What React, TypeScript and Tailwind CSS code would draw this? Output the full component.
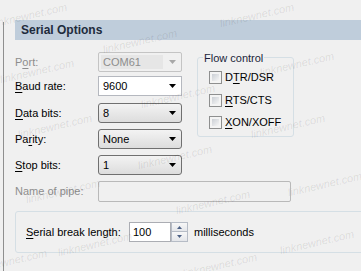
import React from 'react'

// faint diagonal watermark copies, [centerX, centerY]
const marks: [number, number][] = [
  [30, 16], [257, 16], [140, 42], [37, 72], [297, 65], [178, 97],
  [55, 127], [288, 127], [175, 158], [63, 192], [213, 203], [325, 185],
  [95, 245], [317, 243], [10, 262], [220, 266],
]

function Arrow({ color = '#000' }: { color?: string }) {
  return (
    <svg width="7" height="4" viewBox="0 0 7 4" className="shrink-0">
      <path d="M0 0h7L3.5 4z" fill={color} />
    </svg>
  )
}

function DropList({ value }: { value: string }) {
  return (
    <div className="w-[84px] h-[20px] rounded-[3px] border border-[#707070] bg-gradient-to-b from-[#f3f3f3] to-[#dddddd] flex items-center pl-[4px] pr-[5px]">
      <span className="flex-1">{value}</span>
      <Arrow />
    </div>
  )
}

function Row({ label, mt, children }: { label: React.ReactNode; mt: string; children: React.ReactNode }) {
  return (
    <div className={`flex items-center h-[20px] ${mt}`}>
      <div className="w-[83px]">{label}</div>
      {children}
    </div>
  )
}

function CheckRow({ label, mt }: { label: React.ReactNode; mt: string }) {
  return (
    <div className={`flex items-center ${mt}`}>
      <div className="w-[13px] h-[13px] border border-[#8e8f8f] bg-[#f4f4f4] p-[2px]">
        <div className="w-full h-full bg-gradient-to-br from-[#cbcfd5] to-[#f6f6f6]" />
      </div>
      <span className="ml-[3px] leading-[13px]">{label}</span>
    </div>
  )
}

const u = (c: string) => <span className="underline underline-offset-[2px]">{c}</span>

export default function App() {
  return (
    <div className="relative w-[361px] h-[271px] overflow-hidden bg-[#f0f0f0] flex font-['Liberation_Sans',Arial,sans-serif] text-[11px] text-black">
      <div className="ml-[3px] mt-[22px] w-px bg-[#8f8f8f]" />
      <div className="ml-[11px] pt-[20px] flex-1 min-w-0 flex flex-col">
        <div className="h-[20px] bg-[#bfcddb] pl-[6px] flex items-center text-[12px] font-bold text-[#1e2b3c]">
          Serial Options
        </div>

        <div className="flex mt-[12px]">
          <div className="flex flex-col w-[167px]">
            <Row label={<span className="text-[#8d8d8d]">P{u('o')}rt:</span>} mt="">
              <div className="w-[84px] h-[20px] rounded-[2px] border border-[#c4c4c4] flex items-center pl-[2px] pr-[5px]">
                <span className="w-[62px] h-[14px] bg-[#e6e6e6] text-[#8d8d8d] pl-[2px] leading-[14px]">COM61</span>
                <span className="flex-1" />
                <Arrow color="#a8a8a8" />
              </div>
            </Row>
            <Row label={<span>{u('B')}aud rate:</span>} mt="mt-[4px]">
              <div className="w-[84px] h-[20px] border border-[#b5b8bf] bg-white flex items-center pl-[4px] pr-[5px]">
                <span className="flex-1">9600</span>
                <Arrow />
              </div>
            </Row>
            <Row label={<span>{u('D')}ata bits:</span>} mt="mt-[7px]">
              <DropList value="8" />
            </Row>
            <Row label={<span>Pa{u('r')}ity:</span>} mt="mt-[6px]">
              <DropList value="None" />
            </Row>
            <Row label={<span>{u('S')}top bits:</span>} mt="mt-[6px]">
              <DropList value="1" />
            </Row>
          </div>

          <div className="relative ml-[15px] mt-[5px] w-[97px] h-[80px] rounded-[3px] border border-[#d5dfe5] pl-[11px] pt-[13px]">
            <span className="absolute -top-[8px] left-[5px] px-[1px] bg-[#f0f0f0] text-[#1b1f3a]">Flow control</span>
            <CheckRow label={<span>D{u('T')}R/DSR</span>} mt="" />
            <CheckRow label={<span>{u('R')}TS/CTS</span>} mt="mt-[10px]" />
            <CheckRow label={<span>{u('X')}ON/XOFF</span>} mt="mt-[9px]" />
          </div>
        </div>

        <div className="flex items-center mt-[6px] h-[21px]">
          <div className="w-[83px] text-[#8d8d8d]">Name of pipe:</div>
          <div className="w-[193px] h-[21px] rounded-[2px] border border-[#b9b9b9]" />
        </div>

        <div className="mt-[9px] h-[42px] w-[360px] shrink-0 rounded-[3px] border border-[#d5dfe5] flex items-center pl-[10px]">
          <div className="w-[103px]">{u('S')}erial break length:</div>
          <div className="flex h-[20px]">
            <div className="w-[42px] h-[20px] border border-[#abadb3] bg-white pl-[3px] flex items-center">100</div>
            <div className="w-[17px] flex flex-col">
              <div className="h-[10px] border border-[#b6bcc6] bg-gradient-to-b from-[#f7f7f7] to-[#e4e6ea] flex items-center justify-center">
                <svg width="5" height="3" viewBox="0 0 5 3"><path d="M0 3h5L2.5 0z" fill="#4d6185" /></svg>
              </div>
              <div className="h-[10px] border border-t-0 border-[#b6bcc6] bg-gradient-to-b from-[#f7f7f7] to-[#e4e6ea] flex items-center justify-center">
                <svg width="5" height="3" viewBox="0 0 5 3"><path d="M0 0h5L2.5 3z" fill="#4d6185" /></svg>
              </div>
            </div>
          </div>
          <span className="ml-[6px]">milliseconds</span>
        </div>
      </div>

      {marks.map(([x, y], i) => (
        <span
          key={i}
          className="pointer-events-none absolute w-[80px] text-center italic text-[11px] leading-[13px] text-black/10 -rotate-[13deg]"
          style={{ left: x - 40, top: y - 7 }}
        >
          linknewnet.com
        </span>
      ))}
    </div>
  )
}
